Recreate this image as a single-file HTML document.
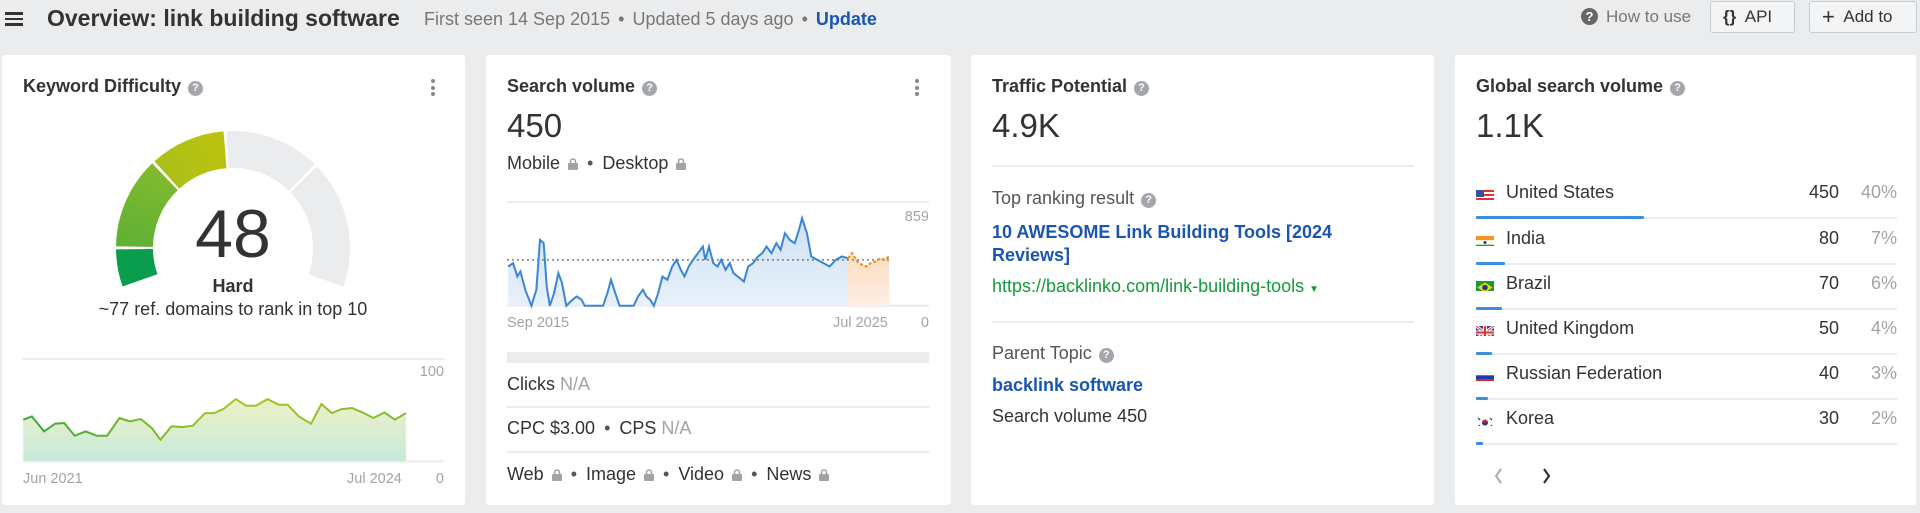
<!DOCTYPE html>
<html><head><meta charset="utf-8"><style>
*{margin:0;padding:0;box-sizing:border-box}
body{width:1920px;height:513px;background:#ebecee;font-family:"Liberation Sans",Arial,sans-serif;color:#333;position:relative;overflow:hidden}
.a{position:absolute;white-space:nowrap}
.card{position:absolute;top:55px;height:450px;background:#fff;border-radius:3px}
.t{font-weight:bold;font-size:18px;color:#333}
.q{display:inline-block;width:15px;height:15px;border-radius:50%;background:#a3a6ab;color:#fff;font-size:11px;font-weight:bold;text-align:center;line-height:15px;vertical-align:1px;margin-left:7px}
.big{font-size:33px;color:#333}
.b16{font-size:18px}
.g{color:#a0a3a8}
.sm{font-size:14.5px}
.hl{position:absolute;height:2px;background:#ececee}
.lk{display:inline-block;width:10px;height:12px;vertical-align:-1px;margin-left:8px}
.dot{color:#555;margin:0 9px}
.dots{position:absolute;width:4px}
.dots i{display:block;width:4px;height:4px;border-radius:50%;background:#888;margin-bottom:2.5px}
.row{position:absolute;left:1476px;width:421px;height:24px;font-size:18px}
.row .n{position:absolute;left:30px;top:0}
.row .v{position:absolute;right:58px;top:0}
.row .p{position:absolute;right:0;top:0;color:#a0a3a8}
.row .fl{position:absolute;left:0;top:5px;width:18px;height:13px;overflow:hidden}
.row .ln{position:absolute;left:0;top:35px;width:421px;height:2px;background:#ececee}
.row .bar{position:absolute;left:0;top:34px;height:3px;background:#3c8fe0;border-radius:1px}
</style></head><body>
<div class="a" style="left:5px;top:12px;width:18px;height:14px">
<div style="height:2.5px;background:#333;margin-bottom:3.2px"></div><div style="height:2.5px;background:#333;margin-bottom:3.2px"></div><div style="height:2.5px;background:#333"></div></div>
<div class="a" style="left:47px;top:5px;font-size:23px;font-weight:bold;color:#333">Overview: link building software</div>
<div class="a" style="left:424px;top:9px;font-size:18px;color:#777">First seen 14 Sep 2015 <span style="margin:0 3px">•</span> Updated 5 days ago <span style="margin:0 3px">•</span> <b style="color:#1a56b0">Update</b></div>
<div class="a" style="left:1581px;top:8px;width:17px;height:17px;border-radius:50%;background:#666;color:#fff;font-size:13px;font-weight:bold;text-align:center;line-height:17px">?</div>
<div class="a" style="left:1606px;top:7px;font-size:17px;color:#777">How to use</div>
<div class="a" style="left:1710px;top:1px;width:85px;height:32px;border:1px solid #c9cbcf;border-radius:3px;background:#f3f4f5;font-size:17px;line-height:30px;padding-left:12px"><b>{}</b>&nbsp; API</div>
<div class="a" style="left:1809px;top:1px;width:108px;height:32px;border:1px solid #c9cbcf;border-radius:3px;background:#f3f4f5;font-size:17px;line-height:30px;padding-left:12px"><span style="font-size:22px;vertical-align:-2px">+</span>&nbsp; Add to</div>

<div class="card" style="left:2px;width:463px"></div>
<div class="card" style="left:486px;width:465px"></div>
<div class="card" style="left:971px;width:463px"></div>
<div class="card" style="left:1455px;width:461px"></div>

<div class="a t" style="left:23px;top:76px">Keyword Difficulty<span class="q">?</span></div>
<div class="dots" style="left:431px;top:79px"><i></i><i></i><i></i></div>
<svg class="a" style="left:0;top:0" width="480" height="330">
<defs>
<linearGradient id="g2" x1="0" y1="1" x2="0.3" y2="0"><stop offset="0" stop-color="#3aa63c"/><stop offset="1" stop-color="#8dbd2d"/></linearGradient>
<linearGradient id="g3" x1="0" y1="0.5" x2="1" y2="0"><stop offset="0" stop-color="#9cbf22"/><stop offset="1" stop-color="#d3c400"/></linearGradient>
</defs>
<g fill="none" stroke-width="37">
<circle cx="233" cy="248" r="98.5" stroke="#0a9d50" stroke-dasharray="31.8 587.1" stroke-dashoffset="-276.3"/>
<circle cx="233" cy="248" r="98.5" stroke="url(#g2)" stroke-dasharray="78.2 540.7" stroke-dashoffset="-310.7"/>
<circle cx="233" cy="248" r="98.5" stroke="url(#g3)" stroke-dasharray="64.5 554.4" stroke-dashoffset="-391.5"/>
<circle cx="233" cy="248" r="98.5" stroke="#ebecee" stroke-dasharray="81.7 537.2" stroke-dashoffset="-458.5"/>
<circle cx="233" cy="248" r="98.5" stroke="#ebecee" stroke-dasharray="109.2 509.7" stroke-dashoffset="-233.3" transform="rotate(180 233 248)"/>
</g>
</svg>
<div class="a" style="left:133px;top:198px;width:200px;text-align:center;font-size:68px;line-height:72px;color:#333">48</div>
<div class="a" style="left:133px;top:276px;width:200px;text-align:center;font-size:18px;font-weight:bold">Hard</div>
<div class="a" style="left:33px;top:299px;width:400px;text-align:center;font-size:18px">~77 ref. domains to rank in top 10</div>
<div class="hl" style="left:23px;top:358px;width:421px"></div>
<div class="a g sm" style="left:394px;top:364px;width:50px;text-align:right">100</div>
<div class="a g sm" style="left:23px;top:471px">Jun 2021</div>
<div class="a g sm" style="left:347px;top:471px">Jul 2024</div>
<div class="a g sm" style="left:430px;top:471px;width:14px;text-align:right">0</div>

<div class="a t" style="left:507px;top:76px">Search volume<span class="q">?</span></div>
<div class="dots" style="left:915px;top:79px"><i></i><i></i><i></i></div>
<div class="a big" style="left:507px;top:107px">450</div>
<div class="a b16" style="left:507px;top:153px">Mobile<svg class="lk" viewBox="0 0 10 12"><rect x="0" y="5" width="10" height="7" rx="1" fill="#a0a3a8"/><path d="M2.5 5V3.5a2.5 2.5 0 0 1 5 0V5" stroke="#a0a3a8" stroke-width="1.6" fill="none"/></svg><span class="dot">•</span>Desktop<svg class="lk" viewBox="0 0 10 12"><rect x="0" y="5" width="10" height="7" rx="1" fill="#a0a3a8"/><path d="M2.5 5V3.5a2.5 2.5 0 0 1 5 0V5" stroke="#a0a3a8" stroke-width="1.6" fill="none"/></svg></div>
<div class="hl" style="left:507px;top:201px;width:422px"></div>
<div class="a g sm" style="left:879px;top:209px;width:50px;text-align:right">859</div>
<div class="a g sm" style="left:507px;top:315px">Sep 2015</div>
<div class="a g sm" style="left:833px;top:315px">Jul 2025</div>
<div class="a g sm" style="left:915px;top:315px;width:14px;text-align:right">0</div>
<div class="a" style="left:507px;top:352px;width:422px;height:11px;background:#ebecee"></div>
<div class="a b16" style="left:507px;top:374px">Clicks <span class="g">N/A</span></div>
<div class="hl" style="left:507px;top:406px;width:422px"></div>
<div class="a b16" style="left:507px;top:418px">CPC $3.00<span class="dot">•</span>CPS <span class="g">N/A</span></div>
<div class="hl" style="left:507px;top:451px;width:422px"></div>
<div class="a b16" style="left:507px;top:464px">Web<svg class="lk" viewBox="0 0 10 12"><rect x="0" y="5" width="10" height="7" rx="1" fill="#a0a3a8"/><path d="M2.5 5V3.5a2.5 2.5 0 0 1 5 0V5" stroke="#a0a3a8" stroke-width="1.6" fill="none"/></svg><span class="dot">•</span>Image<svg class="lk" viewBox="0 0 10 12"><rect x="0" y="5" width="10" height="7" rx="1" fill="#a0a3a8"/><path d="M2.5 5V3.5a2.5 2.5 0 0 1 5 0V5" stroke="#a0a3a8" stroke-width="1.6" fill="none"/></svg><span class="dot">•</span>Video<svg class="lk" viewBox="0 0 10 12"><rect x="0" y="5" width="10" height="7" rx="1" fill="#a0a3a8"/><path d="M2.5 5V3.5a2.5 2.5 0 0 1 5 0V5" stroke="#a0a3a8" stroke-width="1.6" fill="none"/></svg><span class="dot">•</span>News<svg class="lk" viewBox="0 0 10 12"><rect x="0" y="5" width="10" height="7" rx="1" fill="#a0a3a8"/><path d="M2.5 5V3.5a2.5 2.5 0 0 1 5 0V5" stroke="#a0a3a8" stroke-width="1.6" fill="none"/></svg></div>

<svg class="a" style="left:0;top:0" width="960" height="513" viewBox="0 0 1568 1540" preserveAspectRatio="none">
<defs>
<linearGradient id="kdf" x1="0" y1="0" x2="0" y2="1"><stop offset="0" stop-color="#eef1c6"/><stop offset="1" stop-color="#c6eadb"/></linearGradient>
<linearGradient id="kdl" x1="0" y1="0" x2="1" y2="0"><stop offset="0" stop-color="#36a63c"/><stop offset="0.55" stop-color="#a6c424"/><stop offset="1" stop-color="#7cbc36"/></linearGradient>
<linearGradient id="svf" x1="0" y1="0" x2="0" y2="1"><stop offset="0" stop-color="#cfe1f5"/><stop offset="1" stop-color="#e8f1fb"/></linearGradient>
<linearGradient id="orf" x1="0" y1="0" x2="0" y2="1"><stop offset="0" stop-color="#fbdcc0"/><stop offset="1" stop-color="#fdefe2"/></linearGradient>
</defs>
<line x1="38" y1="1385" x2="725" y2="1385" stroke="#ececee" stroke-width="2" vector-effect="non-scaling-stroke"/>
<polygon fill="url(#kdf)" points="38,1385 38,1260 52,1250 72,1295 90,1272 105,1270 122,1308 140,1295 158,1308 175,1308 195,1255 212,1265 230,1258 248,1285 262,1320 280,1280 298,1282 315,1278 335,1240 350,1240 365,1228 385,1198 402,1218 418,1218 437,1198 455,1215 470,1215 488,1250 508,1272 525,1213 542,1240 558,1228 575,1225 592,1238 610,1255 628,1238 645,1260 663,1240 663,1385"/>
<polyline fill="none" stroke="url(#kdl)" stroke-width="2" vector-effect="non-scaling-stroke" points="38,1260 52,1250 72,1295 90,1272 105,1270 122,1308 140,1295 158,1308 175,1308 195,1255 212,1265 230,1258 248,1285 262,1320 280,1280 298,1282 315,1278 335,1240 350,1240 365,1228 385,1198 402,1218 418,1218 437,1198 455,1215 470,1215 488,1250 508,1272 525,1213 542,1240 558,1228 575,1225 592,1238 610,1255 628,1238 645,1260 663,1240"/>
<line x1="828" y1="918" x2="1517" y2="918" stroke="#ececee" stroke-width="2" vector-effect="non-scaling-stroke"/>
<polygon fill="url(#svf)" points="830,918 830,800 838,790 845,830 850,815 858,870 868,918 876,870 882,720 888,730 893,860 898,918 905,880 912,820 918,850 925,918 935,900 942,890 950,900 955,918 985,918 992,880 998,840 1005,880 1012,918 1035,918 1042,890 1050,870 1056,890 1062,900 1068,918 1075,880 1082,830 1090,840 1098,800 1105,780 1112,810 1118,830 1125,800 1132,780 1140,760 1148,740 1152,780 1158,740 1165,790 1172,800 1178,780 1185,810 1192,790 1198,820 1205,830 1215,845 1222,800 1230,790 1238,770 1245,760 1252,740 1260,760 1268,730 1275,750 1282,700 1290,720 1298,730 1305,690 1310,655 1318,700 1325,770 1335,780 1345,790 1355,800 1365,780 1375,770 1385,775 1385,918"/>
<polygon fill="url(#orf)" points="1385,918 1385,775 1392,760 1400,785 1408,795 1415,800 1422,790 1430,785 1438,775 1445,780 1452,770 1452,918"/>
<line x1="828" y1="780" x2="1452" y2="780" stroke="#777" stroke-width="1.5" stroke-dasharray="2 3" vector-effect="non-scaling-stroke"/>
<polyline fill="none" stroke="#3a86d6" stroke-width="2" vector-effect="non-scaling-stroke" points="830,800 838,790 845,830 850,815 858,870 868,918 876,870 882,720 888,730 893,860 898,918 905,880 912,820 918,850 925,918 935,900 942,890 950,900 955,918 985,918 992,880 998,840 1005,880 1012,918 1035,918 1042,890 1050,870 1056,890 1062,900 1068,918 1075,880 1082,830 1090,840 1098,800 1105,780 1112,810 1118,830 1125,800 1132,780 1140,760 1148,740 1152,780 1158,740 1165,790 1172,800 1178,780 1185,810 1192,790 1198,820 1205,830 1215,845 1222,800 1230,790 1238,770 1245,760 1252,740 1260,760 1268,730 1275,750 1282,700 1290,720 1298,730 1305,690 1310,655 1318,700 1325,770 1335,780 1345,790 1355,800 1365,780 1375,770 1385,775"/>
<polyline fill="none" stroke="#f08a1c" stroke-width="2" stroke-dasharray="3 2" vector-effect="non-scaling-stroke" points="1385,775 1392,760 1400,785 1408,795 1415,800 1422,790 1430,785 1438,775 1445,780 1452,770"/>
</svg>

<div class="a t" style="left:992px;top:76px">Traffic Potential<span class="q">?</span></div>
<div class="a big" style="left:992px;top:107px">4.9K</div>
<div class="hl" style="left:992px;top:165px;width:422px"></div>
<div class="a b16" style="left:992px;top:188px;color:#555">Top ranking result<span class="q">?</span></div>
<div class="a" style="left:992px;top:221px;font-size:18px;font-weight:bold;color:#1a56b0;line-height:23px">10 AWESOME Link Building Tools [2024<br>Reviews]</div>
<div class="a b16" style="left:992px;top:276px;color:#159a3c">https://backlinko.com/link-building-tools <span style="font-size:10px">▼</span></div>
<div class="hl" style="left:992px;top:321px;width:422px"></div>
<div class="a b16" style="left:992px;top:343px;color:#555">Parent Topic<span class="q">?</span></div>
<div class="a b16" style="left:992px;top:375px;font-weight:bold;color:#1a56b0">backlink software</div>
<div class="a b16" style="left:992px;top:406px">Search volume 450</div>

<div class="a t" style="left:1476px;top:76px">Global search volume<span class="q">?</span></div>
<div class="a big" style="left:1476px;top:107px">1.1K</div>

<div class="row" style="top:182px"><div class="fl"><svg width="18" height="13"><rect width="18" height="13" fill="#fff"/><g fill="#d33"><rect y="0" width="18" height="2"/><rect y="4" width="18" height="2"/><rect y="8" width="18" height="2"/><rect y="12" width="18" height="1"/></g><rect width="8" height="7" fill="#3c4f9c"/></svg></div><span class="n">United States</span><span class="v">450</span><span class="p">40%</span><div class="ln"></div><div class="bar" style="width:168px"></div></div>
<div class="row" style="top:228px"><div class="fl"><svg width="18" height="13"><rect width="18" height="4.3" fill="#f7931e"/><rect y="4.3" width="18" height="4.4" fill="#fff"/><rect y="8.7" width="18" height="4.3" fill="#1a9a3a"/><circle cx="9" cy="6.5" r="1.5" fill="#1a3c8c"/></svg></div><span class="n">India</span><span class="v">80</span><span class="p">7%</span><div class="ln"></div><div class="bar" style="width:29px"></div></div>
<div class="row" style="top:273px"><div class="fl"><svg width="18" height="13"><rect width="18" height="13" fill="#1a9a3a"/><path d="M9 1.5L16.5 6.5L9 11.5L1.5 6.5Z" fill="#f7d417"/><circle cx="9" cy="6.5" r="2.8" fill="#1a3c8c"/></svg></div><span class="n">Brazil</span><span class="v">70</span><span class="p">6%</span><div class="ln"></div><div class="bar" style="width:26px"></div></div>
<div class="row" style="top:318px"><div class="fl"><svg width="18" height="13"><rect width="18" height="13" fill="#2a3d8f"/><path d="M0 0L18 13M18 0L0 13" stroke="#fff" stroke-width="3"/><path d="M0 0L18 13M18 0L0 13" stroke="#d33" stroke-width="1"/><path d="M9 0V13M0 6.5H18" stroke="#fff" stroke-width="4"/><path d="M9 0V13M0 6.5H18" stroke="#d33" stroke-width="2"/></svg></div><span class="n">United Kingdom</span><span class="v">50</span><span class="p">4%</span><div class="ln"></div><div class="bar" style="width:16px"></div></div>
<div class="row" style="top:363px"><div class="fl"><svg width="18" height="13"><rect width="18" height="4.3" fill="#fff"/><rect y="4.3" width="18" height="4.4" fill="#1a3cb0"/><rect y="8.7" width="18" height="4.3" fill="#d22"/></svg></div><span class="n">Russian Federation</span><span class="v">40</span><span class="p">3%</span><div class="ln"></div><div class="bar" style="width:12px"></div></div>
<div class="row" style="top:408px"><div class="fl"><svg width="18" height="13"><rect width="18" height="13" fill="#fff"/><circle cx="9" cy="6.5" r="3" fill="#d22"/><path d="M6 6.5a3 3 0 0 0 6 0z" fill="#1a3c9c"/><g stroke="#222" stroke-width="1"><path d="M2 2l2 2M14 2l2 2M2 11l2-2M14 11l2-2"/></g></svg></div><span class="n">Korea</span><span class="v">30</span><span class="p">2%</span><div class="ln"></div><div class="bar" style="width:7px"></div></div>

<svg class="a" style="left:1492px;top:466px" width="70" height="20"><path d="M9 3L4 10L9 17" fill="none" stroke="#aaa" stroke-width="2"/><path d="M52 3L57 10L52 17" fill="none" stroke="#333" stroke-width="2.2"/></svg>
</body></html>
